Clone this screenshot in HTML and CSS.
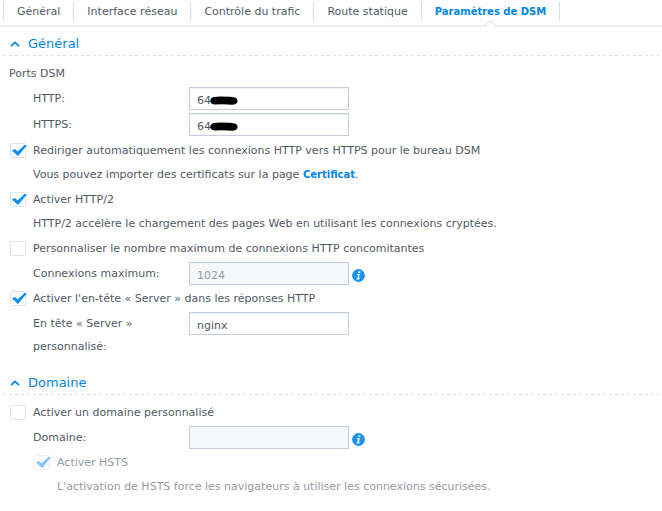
FILE: index.html
```
<!DOCTYPE html>
<html lang="fr">
<head>
  <meta charset="UTF-8" />
  <meta name="viewport" content="width=device-width, initial-scale=1.0"/>
  <title>Paramètres de DSM</title>
  <link rel="stylesheet" href="styles.css">
</head>

<body>
  <!-- Shared symbols -->
  <svg class="symbols" aria-hidden="true">
    <symbol id="chevron" viewBox="0 0 10 6">
      <path d="M1 5.2 5 1.4 9 5.2" fill="none" stroke="#0086e5" stroke-width="1.7"/>
    </symbol>
    <symbol id="redaction" viewBox="0 0 28 9">
      <path d="M4 1 L10 .5 20 .8 25 1.6 Q28 3 27.5 6 Q26 8.8 22 8.7 L12 8.2 5 8.6 Q.5 8 .2 5 Q.5 1.5 4 1Z" fill="#000"/>
    </symbol>
    <symbol id="info" viewBox="0 0 13 13">
      <circle cx="6.5" cy="6.5" r="6.4" fill="#1c93f0"/>
      <path d="M6.5 2.2h2l-.4 1.7h-2zM5 5h2.8l-1 4.2h1l-.3 1.3H4.6l.3-1.2h.5l.7-3H4.8z" fill="#fff"/>
    </symbol>
  </svg>

  <nav class="tabs">
    <a class="tab" href="#general">Général</a>
    <a class="tab" href="#interface">Interface réseau</a>
    <a class="tab" href="#trafic">Contrôle du trafic</a>
    <a class="tab" href="#route">Route statique</a>
    <a class="tab active" href="#dsm">Paramètres de DSM
      <svg class="pointer" viewBox="0 0 12 7"><path d="M0 6.5 6 .8l6 5.7" fill="#fff" stroke="#dcdcdc"/></svg>
    </a>
  </nav>

  <form class="settings">
    <section>
      <h2 class="title"><svg class="chevron"><use href="#chevron"/></svg>Général</h2>

      <p class="group">Ports DSM</p>
      <div class="ports">
        <div class="field">
          <label for="http">HTTP:</label>
          <div class="port">
            <input type="text" id="http" value="64">
            <svg class="redaction"><use href="#redaction"/></svg>
          </div>
        </div>
        <div class="field">
          <label for="https">HTTPS:</label>
          <div class="port">
            <input type="text" id="https" value="64">
            <svg class="redaction"><use href="#redaction"/></svg>
          </div>
        </div>
      </div>

      <div class="check">
        <input type="checkbox" id="redirect" checked>
        <label for="redirect">Rediriger automatiquement les connexions HTTP vers HTTPS pour le bureau DSM</label>
      </div>
      <p class="note">Vous pouvez importer des certificats sur la page <a href="#certificat">Certificat</a>.</p>

      <div class="check">
        <input type="checkbox" id="http2" checked>
        <label for="http2">Activer HTTP/2</label>
      </div>
      <p class="note">HTTP/2 accélère le chargement des pages Web en utilisant les connexions cryptées.</p>

      <div class="check">
        <input type="checkbox" id="limit">
        <label for="limit">Personnaliser le nombre maximum de connexions HTTP concomitantes</label>
      </div>
      <div class="field">
        <label for="max">Connexions maximum:</label>
        <input type="text" id="max" value="1024" disabled>
        <svg class="info"><use href="#info"/></svg>
      </div>

      <div class="check">
        <input type="checkbox" id="header" checked>
        <label for="header">Activer l'en-tête « Server » dans les réponses HTTP</label>
      </div>
      <div class="field">
        <label for="server">En tête « Server » personnalisé:</label>
        <input type="text" id="server" value="nginx">
      </div>
    </section>

    <section>
      <h2 class="title"><svg class="chevron"><use href="#chevron"/></svg>Domaine</h2>

      <div class="check">
        <input type="checkbox" id="custom">
        <label for="custom">Activer un domaine personnalisé</label>
      </div>
      <div class="field">
        <label for="domain">Domaine:</label>
        <input type="text" id="domain" disabled>
        <svg class="info"><use href="#info"/></svg>
      </div>
      <div class="nested">
        <div class="check">
          <input type="checkbox" id="hsts" checked disabled>
          <label for="hsts">Activer HSTS</label>
        </div>
        <p class="note">L'activation de HSTS force les navigateurs à utiliser les connexions sécurisées.</p>
      </div>
    </section>
  </form>
</body>
</html>
```
FILE: styles.css
```
/* Basic Reset */
* {
  margin: 0;
  padding: 0;
  box-sizing: border-box;
}

body {
  background-color: #fff;
  color: #505a64;
  font-family: Verdana, "DejaVu Sans", sans-serif;
  font-size: 11px;
}

a {
  color: #0086e5;
  font-size: 10px;
  font-weight: bold;
  text-decoration: none;
}

.symbols {
  display: none;
}

/* TABS */
.tabs {
  display: flex;
  padding: 2px 3px 4px;
  border-bottom: 2px solid #eeeeee;
}

.tab {
  position: relative;
  padding: 0 13px;
  border-left: 1px solid #d3dfeb;
  line-height: 19px;
  color: #505a64;
  font-size: 11px;
  font-weight: normal;
  white-space: nowrap;
}

.tab.active {
  border-right: 1px solid #d3dfeb;
  color: #0086e5;
  font-size: 10px;
  font-weight: bold;
}

/* small notch under the active tab */
.pointer {
  position: absolute;
  left: 50%;
  bottom: -6px;
  width: 12px;
  height: 7px;
  margin-left: -6px;
}

/* SECTIONS */
.settings {
  padding: 4px 3px;
}

.title {
  display: flex;
  align-items: center;
  height: 25px;
  margin-bottom: 5px;
  padding-left: 7px;
  color: #0086e5;
  font-size: 13px;
  font-weight: normal;
  background: repeating-linear-gradient(90deg, #dcdfe2 0 3px, transparent 3px 6px) bottom / 100% 1px no-repeat;
}

section + section {
  margin-top: 11px;
}

.chevron {
  width: 10px;
  height: 6px;
  margin-right: 8px;
}

.group {
  padding-left: 6px;
  line-height: 25px;
}

.note {
  padding-left: 30px;
  line-height: 24px;
}

/* LABEL + TEXT BOX */
.field {
  display: flex;
  align-items: flex-start;
  padding: 1px 0 1px 30px;
}

.ports .field {
  margin-bottom: 1px;
}

.field label {
  width: 156px;
  padding-right: 20px;
  line-height: 23px;
}

input[type="text"] {
  width: 160px;
  height: 23px;
  padding: 3px 7px 0;
  border: 1px solid #c5cfdb;
  box-shadow: inset 0 1px 0 #f0f3f6;
  background-color: #fff;
  color: #505a64;
  font: inherit;
}

input[type="text"]:disabled {
  background-color: #f5f7f9;
  color: #969ca2;
}

.port {
  position: relative;
}

/* marker stroke over the port digits */
.redaction {
  position: absolute;
  left: 21px;
  top: 9px;
  width: 28px;
  height: 9px;
}

.info {
  width: 13px;
  height: 13px;
  margin: 7px 0 0 3px;
}

/* CHECKBOXES */
.check {
  display: flex;
  align-items: center;
  height: 25px;
  padding-left: 7px;
}

input[type="checkbox"] {
  appearance: none;
  width: 18px;
  height: 16px;
  margin-right: 5px;
  background: url("data:image/svg+xml,%3Csvg xmlns='http://www.w3.org/2000/svg' width='18' height='16'%3E%3Crect x='.5' y='.5' width='15' height='14' rx='1' fill='%23fff' stroke='%23dbe5ee'/%3E%3C/svg%3E") no-repeat;
}

input[type="checkbox"]:checked {
  background-image: url("data:image/svg+xml,%3Csvg xmlns='http://www.w3.org/2000/svg' width='18' height='16'%3E%3Crect x='.5' y='.5' width='15' height='14' rx='1' fill='%23fafcfe' stroke='%23dbe5ee'/%3E%3Cpath d='M2 7.5 4.8 6 7.6 8.6 14.5 2 17 2.2 8 13Z' fill='%230a8cf0'/%3E%3C/svg%3E");
}

input[type="checkbox"]:disabled {
  opacity: 0.5;
}

.nested {
  padding-left: 24px;
  color: #969ca2;
}
```
